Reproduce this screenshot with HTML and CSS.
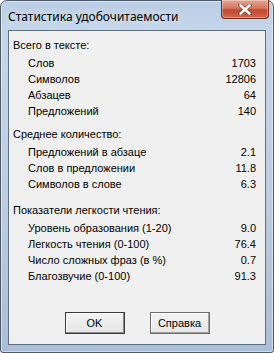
FILE: index.html
```html
<!DOCTYPE html>
<html lang="ru">
<head>
    <meta charset="UTF-8">
    <title>Статистика удобочитаемости</title>
    <link rel="stylesheet" href="styles.css">
</head>
<body>
    <div class="window">
        <div class="titlebar">
            <span class="title">Статистика удобочитаемости</span>
            <div class="close-btn">
                <svg width="14" height="11" viewBox="0 0 14 11">
                    <path d="M2 1 L12 10 M12 1 L2 10" stroke="#5a1a10" stroke-width="4" stroke-linecap="square" opacity="0.5"/>
                    <path d="M2.5 1.5 L11.5 9.5 M11.5 1.5 L2.5 9.5" stroke="#fff" stroke-width="2.6" stroke-linecap="square"/>
                </svg>
            </div>
        </div>

        <div class="client">
            <div class="section">
                <div class="heading">Всего в тексте:</div>
                <div class="row"><span>Слов</span><span>1703</span></div>
                <div class="row"><span>Символов</span><span>12806</span></div>
                <div class="row"><span>Абзацев</span><span>64</span></div>
                <div class="row"><span>Предложений</span><span>140</span></div>
            </div>
            <div class="section section-wide">
                <div class="heading">Среднее количество:</div>
                <div class="row"><span>Предложений в абзаце</span><span>2.1</span></div>
                <div class="row"><span>Слов в предложении</span><span>11.8</span></div>
                <div class="row"><span>Символов в слове</span><span>6.3</span></div>
            </div>
            <div class="section">
                <div class="heading">Показатели легкости чтения:</div>
                <div class="row"><span>Уровень образования (1-20)</span><span>9.0</span></div>
                <div class="row"><span>Легкость чтения (0-100)</span><span>76.4</span></div>
                <div class="row"><span>Число сложных фраз (в %)</span><span>0.7</span></div>
                <div class="row"><span>Благозвучие (0-100)</span><span>91.3</span></div>
            </div>

            <div class="buttons">
                <button class="btn btn-default">OK</button>
                <button class="btn">Справка</button>
            </div>
        </div>
    </div>
</body>
</html>
```

FILE: styles.css
```css
* {
    box-sizing: border-box;
    margin: 0;
    padding: 0;
}
body {
    width: 274px;
    height: 353px;
    background: #ffffff;
    font-family: "Liberation Sans", Arial, sans-serif;
    font-size: 11px;
    color: #000;
}
.window {
    width: 274px;
    height: 353px;
    border: 1px solid #4f5b69;
    border-radius: 7px 7px 3px 3px;
    background: linear-gradient(to bottom, #b9cde4 0px, #c5d6ea 30px, #bccde2 200px, #a9bdd6 353px);
    padding: 0 7px 7px 7px;
    display: flex;
    flex-direction: column;
    box-shadow: inset 0 0 0 1px rgba(255, 255, 255, 0.45);
}
.titlebar {
    height: 29px;
    display: flex;
    align-items: flex-start;
    justify-content: space-between;
}
.title {
    font-family: "Noto Sans", "Open Sans", sans-serif;
    font-size: 12px;
    color: #000;
    margin-top: 7px;
    text-shadow: 0 0 8px rgba(255, 255, 255, 0.9);
}
.close-btn {
    width: 48px;
    height: 19px;
    margin-top: -1px;
    margin-right: -3px;
    border: 1px solid #6b2a22;
    border-top: none;
    border-radius: 0 0 4px 4px;
    background: linear-gradient(to bottom, #e8a493 0%, #d47862 45%, #c2482f 55%, #d0674c 100%);
    display: flex;
    align-items: center;
    justify-content: center;
    box-shadow: inset 0 0 0 1px rgba(255, 255, 255, 0.35);
}
.client {
    flex: 1;
    background: #f0f0f0;
    border: 1px solid #5f6f82;
    padding: 6px 0 0 4px;
    display: flex;
    flex-direction: column;
}
.section {
    margin-bottom: 7px;
}
.section-wide {
    margin-bottom: 10px;
}
.heading {
    height: 17px;
    line-height: 17px;
    margin-bottom: 1px;
}
.row {
    display: flex;
    justify-content: space-between;
    height: 16px;
    line-height: 16px;
    padding-left: 15px;
    width: 243px;
}
.buttons {
    display: flex;
    justify-content: center;
    gap: 25px;
    margin-top: auto;
    margin-bottom: 10px;
    padding-right: 4px;
}
.btn {
    width: 60px;
    height: 22px;
    font-family: "Liberation Sans", Arial, sans-serif;
    font-size: 11px;
    color: #000;
    background: linear-gradient(to bottom, #f4f4f4, #e6e6e6);
    border: 1px solid #707070;
    box-shadow: inset -1px -1px 0 #a0a0a0, inset 1px 1px 0 #ffffff;
}
.btn-default {
    border: 1px solid #3c3c3c;
    box-shadow: inset -1px -1px 0 #8a8a8a, inset 1px 1px 0 #ffffff;
}
```
